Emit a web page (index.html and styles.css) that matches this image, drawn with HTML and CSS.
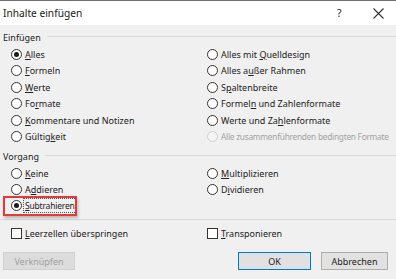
FILE: index.html
```html
<!DOCTYPE html>
<html lang="de">
<head>
    <meta charset="UTF-8">
    <meta name="viewport" content="width=device-width, initial-scale=1.0">
    <title>Inhalte einfügen</title>
    <link rel="stylesheet" href="styles.css">
</head>
<body>
    <div class="dialog">
        <div class="titlebar">
            <span class="title">Inhalte einfügen</span>
            <span class="help">?</span>
            <span class="close">
                <svg width="11" height="11" viewBox="0 0 11 11"><path d="M0.5 0.5 L10.5 10.5 M10.5 0.5 L0.5 10.5" stroke="#333" stroke-width="1.1" fill="none"/></svg>
            </span>
        </div>

        <div class="legend"><span>Einfügen</span></div>
        <div class="options paste">
            <div class="opt"><span class="radio checked"></span><span class="label"><u>A</u>lles</span></div>
            <div class="opt"><span class="radio"></span><span class="label">Alles mit <u>Q</u>uelldesign</span></div>
            <div class="opt"><span class="radio"></span><span class="label"><u>F</u>ormeln</span></div>
            <div class="opt"><span class="radio"></span><span class="label">Alles a<u>u</u>ßer Rahmen</span></div>
            <div class="opt"><span class="radio"></span><span class="label"><u>W</u>erte</span></div>
            <div class="opt"><span class="radio"></span><span class="label">S<u>p</u>altenbreite</span></div>
            <div class="opt"><span class="radio"></span><span class="label">Fo<u>r</u>mate</span></div>
            <div class="opt"><span class="radio"></span><span class="label">Formel<u>n</u> und Zahlenformate</span></div>
            <div class="opt"><span class="radio"></span><span class="label"><u>K</u>ommentare und Notizen</span></div>
            <div class="opt"><span class="radio"></span><span class="label">Werte und Za<u>h</u>lenformate</span></div>
            <div class="opt"><span class="radio"></span><span class="label">Gültig<u>k</u>eit</span></div>
            <div class="opt disabled"><span class="radio"></span><span class="label">Alle zusammenführenden bedingten Formate</span></div>
        </div>

        <div class="legend second"><span>Vorgang</span></div>
        <div class="options operation">
            <div class="opt"><span class="radio"></span><span class="label"><u>K</u>eine</span></div>
            <div class="opt"><span class="radio"></span><span class="label"><u>M</u>ultiplizieren</span></div>
            <div class="opt"><span class="radio"></span><span class="label">A<u>d</u>dieren</span></div>
            <div class="opt"><span class="radio"></span><span class="label">D<u>i</u>vidieren</span></div>
            <div class="opt marked">
                <div class="highlight"></div>
                <span class="radio checked"></span><span class="label focus"><u>S</u>ubtrahieren</span>
            </div>
        </div>

        <div class="separator"></div>

        <div class="options checks">
            <div class="opt"><span class="checkbox"></span><span class="label"><u>L</u>eerzellen überspringen</span></div>
            <div class="opt"><span class="checkbox"></span><span class="label"><u>T</u>ransponieren</span></div>
        </div>

        <div class="buttons">
            <button class="btn link" disabled>Verknüpfen</button>
            <div class="spacer"></div>
            <button class="btn default">OK</button>
            <button class="btn cancel">Abbrechen</button>
        </div>
    </div>
</body>
</html>
```

FILE: styles.css
```css
body {
    margin: 0;
    font-family: "Noto Sans", "Open Sans", sans-serif;
    font-size: 9px;
    color: #222;
    background: #f0f0f0;
}
.dialog {
    width: 396px;
    height: 279px;
    background: #f0f0f0;
    overflow: hidden;
}
.titlebar {
    height: 24px;
    border-top: 1px solid #707070;
    background: #fff;
    display: flex;
    align-items: center;
}
.title {
    font-size: 10.2px;
    padding-left: 3px;
    flex: 1;
    color: #1a1a1a;
}
.help {
    font-size: 10.5px;
    width: 10px;
    margin-right: 26px;
}
.close {
    display: flex;
    width: 11px;
    margin-right: 12px;
}
.legend {
    height: 18px;
    margin-top: 3px;
    display: flex;
    align-items: center;
    padding-left: 3px;
}
.legend::after {
    content: "";
    flex: 1;
    height: 1px;
    background: #dadada;
    margin-left: 6px;
    margin-top: -2px;
}
.legend.second {
    margin-top: 2px;
}
.options {
    display: grid;
    grid-template-columns: 196px 1fr;
    padding-left: 11px;
}
.paste {
    grid-auto-rows: 16.5px;
}
.operation {
    grid-auto-rows: 16px;
}
.opt {
    display: flex;
    align-items: center;
    position: relative;
    white-space: nowrap;
}
.radio {
    width: 11px;
    height: 11px;
    box-sizing: border-box;
    border: 1px solid #333;
    border-radius: 50%;
    background: #fff;
    margin-right: 3px;
    display: flex;
    align-items: center;
    justify-content: center;
    flex: none;
}
.radio.checked::after {
    content: "";
    width: 5px;
    height: 5px;
    border-radius: 50%;
    background: #1a1a1a;
}
.disabled .radio {
    border-color: #cfcfcf;
    background: #f4f4f4;
}
.disabled .label {
    color: #a2a2a2;
    font-size: 8.3px;
    letter-spacing: -0.25px;
}
.label u {
    text-decoration-thickness: 1px;
    text-underline-offset: 1px;
}
.highlight {
    position: absolute;
    left: -8px;
    top: -1px;
    width: 74px;
    height: 20px;
    box-sizing: border-box;
    border: 2px solid #e53a3a;
    box-shadow: 1px 2px 3px rgba(0, 0, 0, 0.25);
}
.focus {
    outline: 1px dotted #555;
    outline-offset: 0;
    padding: 0 1px;
    margin-left: -1px;
    line-height: 13px;
    font-size: 8.5px;
    letter-spacing: -0.2px;
}
.separator {
    height: 1px;
    background: #dadada;
    margin-top: 6px;
}
.checks {
    height: 16px;
    margin-top: 5px;
}
.checkbox {
    width: 11px;
    height: 11px;
    box-sizing: border-box;
    border: 1px solid #333;
    background: #fff;
    margin-right: 3px;
    flex: none;
}
.buttons {
    display: flex;
    padding: 0 8px 0 3px;
    margin-top: 11px;
    gap: 10px;
}
.spacer {
    flex: 1;
}
.btn {
    height: 18px;
    padding: 0;
    font-family: inherit;
    font-size: 9px;
    color: #222;
    background: #e1e1e1;
    border: 1px solid #adadad;
    box-sizing: border-box;
}
.btn.link {
    width: 72px;
    color: #a0a0a0;
    background: #dcdcdc;
    border-color: #d0d0d0;
}
.btn.default {
    width: 73px;
    border-color: #0078d7;
}
.btn.cancel {
    width: 67px;
}
```
